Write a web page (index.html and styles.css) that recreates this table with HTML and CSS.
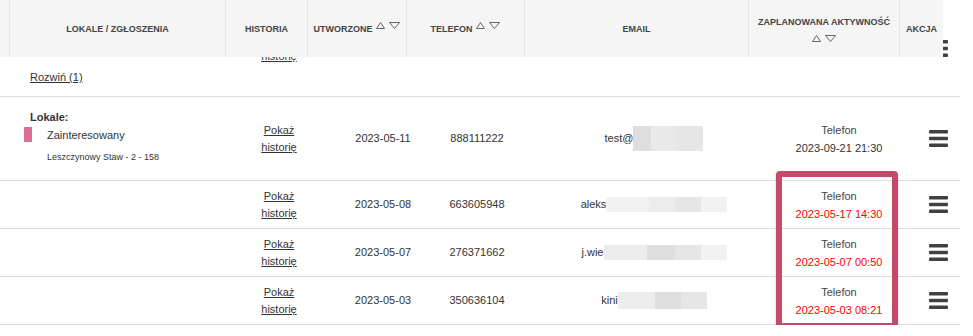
FILE: index.html
```html
<!DOCTYPE html>
<html lang="pl">
<head>
<meta charset="utf-8">
<title>Lokale</title>
<link rel="stylesheet" href="styles.css">
</head>
<body>
<div class="table">
  <div class="row row-expand">
    <div class="cell c-lokale c-expand"><a class="link" href="#">Rozwiń (1)</a></div>
    <div class="cell c-hist"><a class="link" href="#">Pokaż<br>historię</a></div>
    <div class="cell c-date"></div>
    <div class="cell c-phone"></div>
    <div class="cell c-email"></div>
    <div class="cell c-act"></div>
    <div class="cell c-menu"><svg class="hamb" viewBox="0 0 19 17" width="19" height="17"><rect x="0" y="0" width="19" height="3.5" rx="1"/><rect x="0" y="6.7" width="19" height="3.5" rx="1"/><rect x="0" y="13.4" width="19" height="3.5" rx="1"/></svg></div>
  </div>

  <div class="row row-lokal">
    <div class="cell c-lokale c-top">
      <div class="lok-title">Lokale:</div>
      <div class="lok-item">
        <span class="lok-bar"></span>
        <div class="lok-text">
          <div class="lok-status">Zainteresowany</div>
          <div class="lok-addr">Leszczynowy Staw - 2 - 158</div>
        </div>
      </div>
    </div>
    <div class="cell c-hist"><a class="link" href="#">Pokaż<br>historię</a></div>
    <div class="cell c-date">2023-05-11</div>
    <div class="cell c-phone">888111222</div>
    <div class="cell c-email"><span>test@</span><span class="blur w18 g1"></span><span class="blur w26 g2"></span><span class="blur w26 g3"></span></div>
    <div class="cell c-act"><div class="act-type">Telefon</div><div class="act-date">2023-09-21 21:30</div></div>
    <div class="cell c-menu"><svg class="hamb" viewBox="0 0 19 17" width="19" height="17"><rect x="0" y="0" width="19" height="3.5" rx="1"/><rect x="0" y="6.7" width="19" height="3.5" rx="1"/><rect x="0" y="13.4" width="19" height="3.5" rx="1"/></svg></div>
  </div>

  <div class="row">
    <div class="cell c-lokale"></div>
    <div class="cell c-hist"><a class="link" href="#">Pokaż<br>historię</a></div>
    <div class="cell c-date">2023-05-08</div>
    <div class="cell c-phone">663605948</div>
    <div class="cell c-email"><span>aleks</span><span class="blur sm w43 g5"></span><span class="blur sm w26 g4"></span><span class="blur sm w26 g3"></span><span class="blur sm w26 g5"></span></div>
    <div class="cell c-act"><div class="act-type">Telefon</div><div class="act-date overdue">2023-05-17 14:30</div></div>
    <div class="cell c-menu"><svg class="hamb" viewBox="0 0 19 17" width="19" height="17"><rect x="0" y="0" width="19" height="3.5" rx="1"/><rect x="0" y="6.7" width="19" height="3.5" rx="1"/><rect x="0" y="13.4" width="19" height="3.5" rx="1"/></svg></div>
  </div>

  <div class="row">
    <div class="cell c-lokale"></div>
    <div class="cell c-hist"><a class="link" href="#">Pokaż<br>historię</a></div>
    <div class="cell c-date">2023-05-07</div>
    <div class="cell c-phone">276371662</div>
    <div class="cell c-email"><span>j.wie</span><span class="blur sm w43 g4"></span><span class="blur sm w28 g1"></span><span class="blur sm w26 g3"></span><span class="blur sm w26 g5"></span></div>
    <div class="cell c-act"><div class="act-type">Telefon</div><div class="act-date overdue">2023-05-07 00:50</div></div>
    <div class="cell c-menu"><svg class="hamb" viewBox="0 0 19 17" width="19" height="17"><rect x="0" y="0" width="19" height="3.5" rx="1"/><rect x="0" y="6.7" width="19" height="3.5" rx="1"/><rect x="0" y="13.4" width="19" height="3.5" rx="1"/></svg></div>
  </div>

  <div class="row">
    <div class="cell c-lokale"></div>
    <div class="cell c-hist"><a class="link" href="#">Pokaż<br>historię</a></div>
    <div class="cell c-date">2023-05-03</div>
    <div class="cell c-phone">350636104</div>
    <div class="cell c-email"><span>kini</span><span class="blur md w37 g4"></span><span class="blur md w26 g1"></span><span class="blur md w26 g3"></span></div>
    <div class="cell c-act"><div class="act-type">Telefon</div><div class="act-date overdue">2023-05-03 08:21</div></div>
    <div class="cell c-menu"><svg class="hamb" viewBox="0 0 19 17" width="19" height="17"><rect x="0" y="0" width="19" height="3.5" rx="1"/><rect x="0" y="6.7" width="19" height="3.5" rx="1"/><rect x="0" y="13.4" width="19" height="3.5" rx="1"/></svg></div>
  </div>

  <div class="thead">
    <div class="th th-first"></div>
    <div class="th">LOKALE / ZGŁOSZENIA</div>
    <div class="th">HISTORIA</div>
    <div class="th"><span>UTWORZONE</span><svg class="sort" viewBox="0 0 25 8" width="25" height="8"><polygon points="0.5,6.5 4.5,0.5 8.5,6.5"/><polygon points="13.5,0.5 23.5,0.5 18.5,6.5"/></svg></div>
    <div class="th"><span>TELEFON</span><svg class="sort" viewBox="0 0 25 8" width="25" height="8"><polygon points="0.5,6.5 4.5,0.5 8.5,6.5"/><polygon points="13.5,0.5 23.5,0.5 18.5,6.5"/></svg></div>
    <div class="th">EMAIL</div>
    <div class="th th-col"><span>ZAPLANOWANA AKTYWNOŚĆ</span><svg class="sort sort-low" viewBox="0 0 25 8" width="25" height="8"><polygon points="0.5,6.5 4.5,0.5 8.5,6.5"/><polygon points="13.5,0.5 23.5,0.5 18.5,6.5"/></svg></div>
    <div class="th">AKCJA</div>
  </div>

  <div class="highlight"></div>
</div>
</body>
</html>
```

FILE: styles.css
```css
html, body {
  margin: 0;
  padding: 0;
  background: #fff;
}

body {
  font-family: "Liberation Sans", Arial, sans-serif;
  font-size: 11px;
  color: #333;
}

.table {
  position: relative;
  width: 960px;
}

.row {
  display: grid;
  grid-template-columns: 238px 82px 126px 62px 262px 138px 52px;
  align-items: center;
  height: 48px;
  box-sizing: border-box;
  border-bottom: 1px solid #dedede;
}

.row-expand {
  height: 97px;
}

.row-lokal {
  height: 84px;
}

.cell {
  text-align: center;
  line-height: 17px;
}

.c-lokale {
  text-align: left;
  padding-left: 24px;
}

.c-expand {
  align-self: end;
  padding-left: 30px;
  padding-bottom: 10px;
}

.c-top {
  align-self: start;
  padding-top: 12px;
}

.link {
  color: #333;
  text-decoration: underline;
}

.lok-title {
  font-weight: bold;
  padding-left: 6px;
}

.lok-item {
  display: flex;
  align-items: flex-start;
  margin-top: 1px;
}

.lok-bar {
  width: 8px;
  height: 15px;
  background: #dc7094;
  margin-right: 15px;
}

.lok-status {
  line-height: 17px;
}

.lok-addr {
  font-size: 9px;
  line-height: 14px;
  margin-top: 6px;
}

.c-email {
  display: flex;
  justify-content: center;
  align-items: center;
  padding-left: 30px;
}

.blur {
  display: inline-block;
  height: 25px;
}

.blur.sm {
  height: 15px;
}

.blur.md {
  height: 17px;
}

.w18 { width: 18px; }
.w26 { width: 26px; }
.w28 { width: 28px; }
.w37 { width: 37px; }
.w43 { width: 43px; }

.g1 { background: #dedede; }
.g2 { background: #e9e9e9; }
.g3 { background: #e6e6e6; }
.g4 { background: #ececec; }
.g5 { background: #f1f1f1; }

.act-type {
  color: #444;
  line-height: 18px;
}

.act-date {
  line-height: 18px;
}

.act-date.overdue {
  color: #ff0000;
}

.c-menu {
  display: flex;
  justify-content: flex-start;
  padding-left: 21px;
}

.hamb {
  display: block;
  fill: #404040;
}

.thead {
  position: absolute;
  top: 0;
  left: 0;
  width: 943px;
  height: 57px;
  background: #f5f5f5;
  display: grid;
  grid-template-columns: 9px 216px 82px 99px 118px 224px 151px 44px;
}

.th {
  display: flex;
  align-items: center;
  justify-content: center;
  border-left: 1px solid #e4e4e4;
  font-size: 9px;
  font-weight: bold;
  color: #444;
  text-align: center;
  line-height: 17px;
  padding-top: 2px;
  box-sizing: border-box;
}

.th-first {
  border-left: none;
}

.th-col {
  flex-direction: column;
  padding-top: 0;
}

.sort {
  display: block;
  margin-left: 3px;
  margin-bottom: 7px;
  fill: none;
  stroke: #666;
  stroke-width: 1;
}

.sort-low {
  margin: 4px 0 0 0;
}

.highlight {
  position: absolute;
  left: 776px;
  top: 171px;
  width: 122px;
  height: 158px;
  box-sizing: border-box;
  border: 6px solid #c44a6a;
  border-radius: 4px;
  box-shadow: 0 1px 2px rgba(0, 0, 0, 0.3);
}
```
